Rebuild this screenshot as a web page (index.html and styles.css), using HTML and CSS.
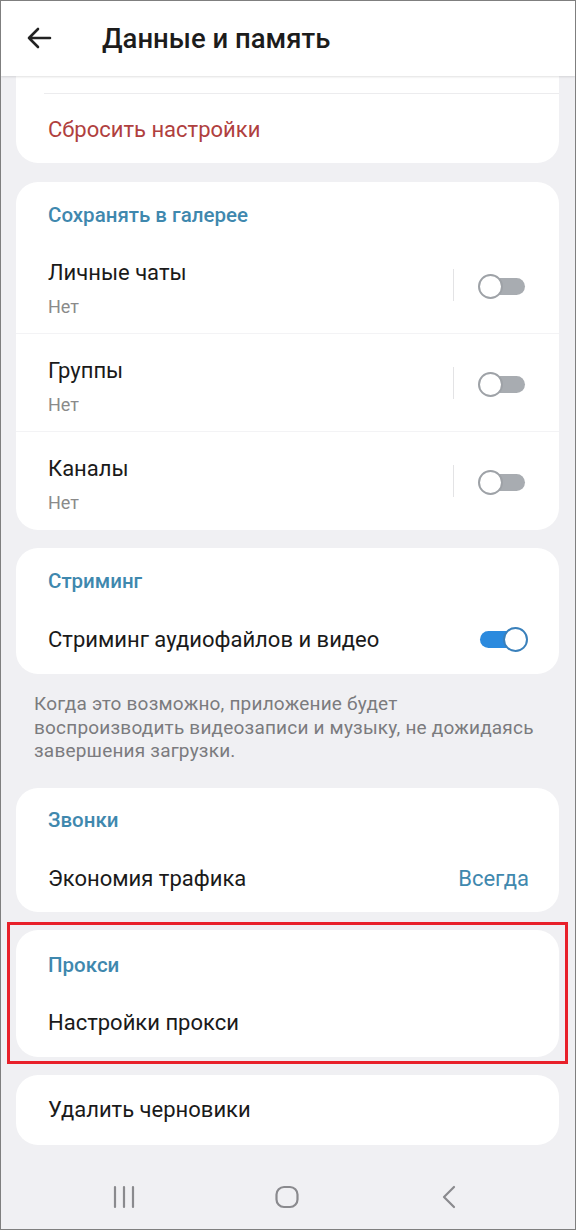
FILE: index.html
```html
<!DOCTYPE html>
<html lang="ru">
<head>
    <meta charset="UTF-8">
    <meta name="viewport" content="width=device-width, initial-scale=1.0">
    <title>Данные и память</title>
    <link rel="stylesheet" href="styles.css">
</head>
<body>
    <div class="screen">
        <div class="topbar">
            <svg class="back" width="26" height="22" viewBox="0 0 26 22">
                <path d="M24 11H3M12 2L3 11l9 9" fill="none" stroke="#222" stroke-width="2.6" stroke-linecap="round" stroke-linejoin="round"/>
            </svg>
            <h1>Данные и память</h1>
        </div>

        <div class="content">
            <div class="card card-cut">
                <div class="cut-space"></div>
                <div class="row row-reset"><span class="danger">Сбросить настройки</span></div>
            </div>

            <div class="card">
                <div class="section-title st-gallery">Сохранять в галерее</div>
                <div class="row row-two">
                    <div class="row-text">
                        <div class="label">Личные чаты</div>
                        <div class="sub">Нет</div>
                    </div>
                    <span class="vline"></span>
                    <span class="toggle"></span>
                </div>
                <div class="row row-two">
                    <div class="row-text">
                        <div class="label">Группы</div>
                        <div class="sub">Нет</div>
                    </div>
                    <span class="vline"></span>
                    <span class="toggle"></span>
                </div>
                <div class="row row-two last">
                    <div class="row-text">
                        <div class="label">Каналы</div>
                        <div class="sub">Нет</div>
                    </div>
                    <span class="vline"></span>
                    <span class="toggle"></span>
                </div>
            </div>

            <div class="card">
                <div class="section-title st-stream">Стриминг</div>
                <div class="row row-one stream-row">
                    <div class="label">Стриминг аудиофайлов и видео</div>
                    <span class="toggle on"></span>
                </div>
            </div>
            <p class="hint">Когда это возможно, приложение будет<br>воспроизводить видеозаписи и музыку, не дожидаясь<br>завершения загрузки.</p>

            <div class="card">
                <div class="section-title st-calls">Звонки</div>
                <div class="row row-one calls-row">
                    <div class="label">Экономия трафика</div>
                    <span class="value">Всегда</span>
                </div>
            </div>

            <div class="highlight">
                <div class="card">
                    <div class="section-title st-proxy">Прокси</div>
                    <div class="row row-one proxy-row">
                        <div class="label">Настройки прокси</div>
                    </div>
                </div>
            </div>

            <div class="card">
                <div class="row row-one drafts-row">
                    <div class="label">Удалить черновики</div>
                </div>
            </div>
        </div>

        <div class="navbar">
            <svg class="nav-recent" width="22" height="24" viewBox="0 0 22 24">
                <path d="M2 2v20M11 2v20M20 2v20" stroke="#8a8a8e" stroke-width="2.2" stroke-linecap="round"/>
            </svg>
            <svg class="nav-home" width="24" height="24" viewBox="0 0 24 24">
                <rect x="1.5" y="2" width="21" height="20" rx="7.5" fill="none" stroke="#8a8a8e" stroke-width="2.2"/>
            </svg>
            <svg class="nav-back" width="16" height="24" viewBox="0 0 16 24">
                <path d="M13 2L3 12l10 10" fill="none" stroke="#8a8a8e" stroke-width="2.2" stroke-linecap="round" stroke-linejoin="round"/>
            </svg>
        </div>
    </div>
</body>
</html>
```

FILE: styles.css
```css
body {
    margin: 0;
    padding: 0;
    font-family: Roboto, "Noto Sans", Arial, sans-serif;
    background: #fff;
}
.screen {
    width: 574px;
    height: 1228px;
    border: 1px solid #7f7f7f;
    background-color: #f0f0f3;
    display: flex;
    flex-direction: column;
    overflow: hidden;
}
.topbar {
    height: 75px;
    background: #fff;
    display: flex;
    align-items: center;
    box-shadow: 0 1px 2px rgba(0, 0, 0, 0.12);
    position: relative; /* keep shadow above the cards */
    z-index: 2;
    flex-shrink: 0;
}
.back {
    margin-left: 25px;
    margin-top: -1px;
}
.topbar h1 {
    margin: 0 0 0 50px;
    font-size: 27.5px;
    font-weight: 500;
    color: #1c1c1c;
}
.content {
    flex: 1;
    padding: 0 16px 0 15px;
}
.card {
    background: #fff;
    border-radius: 22px;
    margin-bottom: 18px;
}
.card-cut {
    border-radius: 0 0 22px 22px;
    margin-bottom: 19px;
}
.cut-space {
    height: 17px;
    margin-left: 28px;
    border-bottom: 1px solid #ececee;
}
.row {
    display: flex;
    align-items: center;
    padding: 0 30px 0 32px;
}
.row-reset {
    height: 69px;
    padding-top: 2px;
    box-sizing: border-box;
}
.danger {
    color: #b0403e;
    font-size: 22px;
}
.section-title {
    font-size: 20.5px;
    font-weight: 500;
    color: #3f88ae;
    line-height: 26px;
    padding-left: 32px;
}
.st-gallery {
    padding-top: 20px;
    padding-bottom: 8px;
}
.row-two {
    height: 98px;
    box-sizing: border-box;
    border-bottom: 1px solid #f3f3f5;
    padding-right: 33px;
}
.row-two.last {
    border-bottom: none;
    margin-bottom: 2px;
}
.row-text {
    flex: 1;
    margin-top: 10px;
}
.label {
    font-size: 22px;
    color: #1a1a1a;
    line-height: 26px;
}
.sub {
    font-size: 18px;
    color: #8a8a8a;
    line-height: 26px;
    margin-top: 8px;
}
.vline {
    width: 1px;
    height: 32px;
    background: #e3e3e5;
    margin-right: 24px;
}
.toggle {
    position: relative;
    width: 48px;
    height: 25px;
    margin-top: 3px;
}
.toggle::before {
    content: "";
    position: absolute;
    left: 3px;
    right: 1px;
    top: 4px;
    height: 17px;
    border-radius: 9px;
    background: #a8acb1;
}
.toggle::after {
    content: "";
    position: absolute;
    left: 0;
    top: 0;
    width: 21px;
    height: 21px;
    border-radius: 50%;
    border: 2px solid #9ea2a7;
    background: #fff;
}
.toggle.on::before {
    background: #2b8ade;
    left: 0;
    right: 10px;
}
.toggle.on::after {
    left: auto;
    right: 0;
    border-color: #3a80bb;
}
.st-stream {
    padding-top: 20px;
    padding-bottom: 12px;
}
.stream-row {
    height: 68px;
    justify-content: space-between;
    padding-right: 31px;
}
.stream-row .toggle {
    margin-top: -2px;
}
.hint {
    margin: 16px 0 25px 2px;
    padding-left: 16px;
    font-size: 19px;
    letter-spacing: 0.2px;
    line-height: 23.5px;
    color: #7b7b7e;
    white-space: nowrap;
}
.st-calls {
    padding-top: 19px;
    padding-bottom: 13px;
}
.calls-row {
    height: 66px;
    justify-content: space-between;
}
.value {
    color: #3f88ae;
    font-size: 22px;
}
.highlight {
    border: 3px solid #e8202a;
    padding: 5px 6px 4px 6px;
    margin: -8px -9px 0 -9px;
}
.highlight .card {
    margin-bottom: 0;
}
.st-proxy {
    padding-top: 22px;
    padding-bottom: 12px;
}
.proxy-row {
    height: 67px;
}
.highlight + .card {
    margin-top: 11px;
}
.drafts-row {
    height: 70px;
}
.navbar {
    height: 64px;
    display: flex;
    align-items: center;
    padding-left: 112px;
    flex-shrink: 0;
}
.nav-home {
    margin-left: 140px;
}
.nav-back {
    margin-left: 142px;
}
```
